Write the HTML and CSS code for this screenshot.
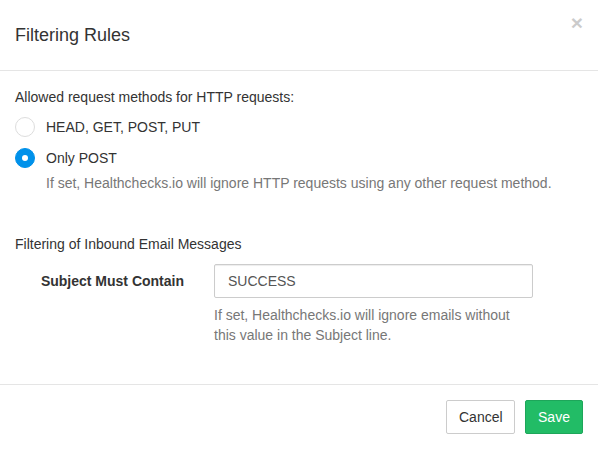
FILE: index.html
```html
<!DOCTYPE html>
<html>
<head>
<meta charset="utf-8">
<link rel="stylesheet" href="styles.css">
</head>
<body>
<div class="modal">
  <div class="modal-header">
    <h4 class="modal-title">Filtering Rules</h4>
    <span class="close">&times;</span>
  </div>
  <div class="modal-body">
    <p class="group-label">Allowed request methods for HTTP requests:</p>
    <label class="radio-row"><span class="radio"></span>HEAD, GET, POST, PUT</label>
    <label class="radio-row second"><span class="radio checked"></span>Only POST</label>
    <p class="help indent">If set, Healthchecks.io will ignore HTTP requests using any other request method.</p>

    <p class="group-label section">Filtering of Inbound Email Messages</p>
    <div class="form-row">
      <div class="form-label">Subject Must Contain</div>
      <div class="form-field">
        <div class="input">SUCCESS</div>
        <p class="help field-help">If set, Healthchecks.io will ignore emails without this value in the Subject line.</p>
      </div>
    </div>
  </div>
  <div class="modal-footer">
    <button class="btn btn-default">Cancel</button>
    <button class="btn btn-primary">Save</button>
  </div>
</div>
</body>
</html>
```
FILE: styles.css
```css
html, body {
  margin: 0;
  padding: 0;
  background: #fff;
}
body {
  font-family: "Liberation Sans", Arial, sans-serif;
  font-size: 14px;
  line-height: 20px;
  color: #333;
}
.modal {
  width: 598px;
  height: 449px;
  display: flex;
  flex-direction: column;
  box-sizing: border-box;
}
.modal-header {
  position: relative;
  height: 71px;
  flex: none;
  box-sizing: border-box;
  border-bottom: 1px solid #e5e5e5;
  padding: 0 15px;
  display: flex;
  align-items: center;
}
.modal-title {
  margin: 0;
  font-size: 18px;
  font-weight: normal;
  line-height: 26px;
  color: #333;
}
.close {
  position: absolute;
  right: 15px;
  top: 12px;
  font-size: 21px;
  font-weight: bold;
  line-height: 21px;
  color: #000;
  opacity: 0.2;
}
.modal-body {
  flex: 1;
  padding: 16px 15px 0;
}
.group-label {
  margin: 0;
}
.section {
  margin-top: 41px;
}
.radio-row {
  display: flex;
  align-items: center;
  margin-top: 10px;
  height: 20px;
}
.radio-row.second {
  margin-top: 11px;
}
.radio {
  width: 18px;
  height: 18px;
  border: 1px solid #ddd;
  border-radius: 50%;
  margin-right: 11px;
  box-sizing: content-box;
  position: relative;
  background: #fff;
}
.radio.checked {
  background: #0091ea;
  border-color: #0091ea;
}
.radio.checked::after {
  content: "";
  position: absolute;
  left: 6px;
  top: 6px;
  width: 6px;
  height: 6px;
  border-radius: 50%;
  background: #fff;
}
.help {
  margin: 5px 0 0;
  color: #777;
}
.indent {
  padding-left: 31px;
}
.form-row {
  display: flex;
  margin: 10px -15px 0;
}
.form-label {
  width: 184px;
  text-align: right;
  font-weight: bold;
  padding-top: 7px;
  box-sizing: border-box;
}
.form-field {
  margin-left: 30px;
  width: 319px;
}
.input {
  height: 34px;
  box-sizing: border-box;
  border: 1px solid #ccc;
  border-radius: 2px;
  padding: 6px 13px;
  color: #555;
  box-shadow: inset 0 1px 1px rgba(0,0,0,0.075);
}
.field-help {
  margin-top: 7px;
  line-height: 20px;
}
.modal-footer {
  height: 65px;
  flex: none;
  box-sizing: border-box;
  border-top: 1px solid #e5e5e5;
  padding: 15px 15px 15px;
  display: flex;
  justify-content: flex-end;
  gap: 10px;
}
.btn {
  height: 34px;
  font-family: inherit;
  font-size: 14px;
  line-height: 20px;
  padding: 6px 12px;
  border-radius: 2px;
  border: 1px solid transparent;
  box-sizing: border-box;
}
.btn-default {
  background: #fff;
  border-color: #ccc;
  color: #333;
  width: 69px;
}
.btn-primary {
  background: #22bc66;
  border-color: #1ea65a;
  color: #fff;
  width: 58px;
}
```
